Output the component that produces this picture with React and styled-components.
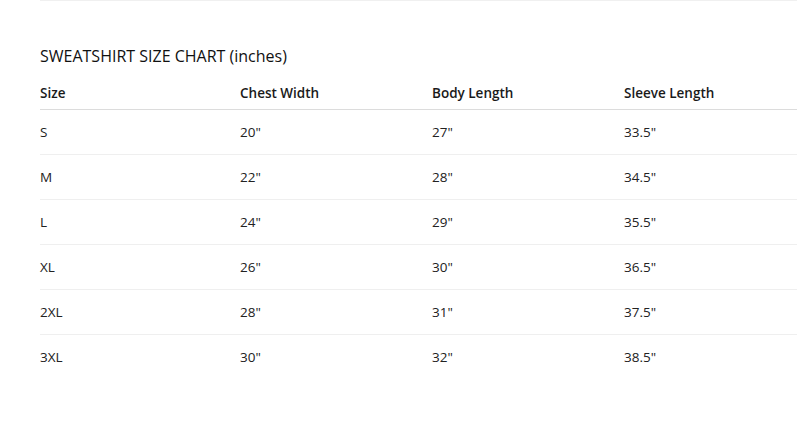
import React from 'react';
import styled, { createGlobalStyle } from 'styled-components';

const GlobalStyle = createGlobalStyle`
  html, body {
    margin: 0;
    padding: 0;
    background: #ffffff;
  }
  body {
    font-family: "Open Sans", "Noto Sans", sans-serif;
    color: #222222;
    overflow: hidden;
  }
`;

const Page = styled.div`
  width: 797px;
  height: 430px;
  padding-left: 40px;
  box-sizing: border-box;
`;

const Divider = styled.div`
  height: 1px;
  background: #f0f0f0;
`;

const ChartTitle = styled.h3`
  margin: 44px 0 0;
  font-size: 16px;
  line-height: 22px;
  font-weight: 400;
  color: #111111;
`;

const Table = styled.div`
  margin-top: 11px;
`;

const Row = styled.div`
  display: grid;
  grid-template-columns: 200px 192px 192px 1fr;
  align-items: center;
  height: ${(p) => (p.$head ? '32px' : '45px')};
  border-bottom: 1px solid ${(p) => (p.$head ? '#dcdcdc' : p.$last ? 'transparent' : '#efefef')};
  box-sizing: border-box;
  font-size: 13.5px;
  font-weight: ${(p) => (p.$head ? 600 : 400)};
  color: ${(p) => (p.$head ? '#1a1a1a' : '#222222')};
`;

const Cell = styled.div`
  padding-bottom: ${(p) => (p.$head ? '2px' : '1px')};
  white-space: nowrap;
`;

const headers = ['Size', 'Chest Width', 'Body Length', 'Sleeve Length'];

const rows = [
  ['S', '20"', '27"', '33.5"'],
  ['M', '22"', '28"', '34.5"'],
  ['L', '24"', '29"', '35.5"'],
  ['XL', '26"', '30"', '36.5"'],
  ['2XL', '28"', '31"', '37.5"'],
  ['3XL', '30"', '32"', '38.5"'],
];

const App = () => (
  <>
    <GlobalStyle />
    <Page>
      <Divider />
      <ChartTitle>SWEATSHIRT SIZE CHART (inches)</ChartTitle>
      <Table>
        <Row $head>
          {headers.map((h) => (
            <Cell $head key={h}>{h}</Cell>
          ))}
        </Row>
        {rows.map((r, i) => (
          <Row key={r[0]} $last={i === rows.length - 1}>
            {r.map((c, j) => (
              <Cell key={j}>{c}</Cell>
            ))}
          </Row>
        ))}
      </Table>
    </Page>
  </>
);

export default App;
